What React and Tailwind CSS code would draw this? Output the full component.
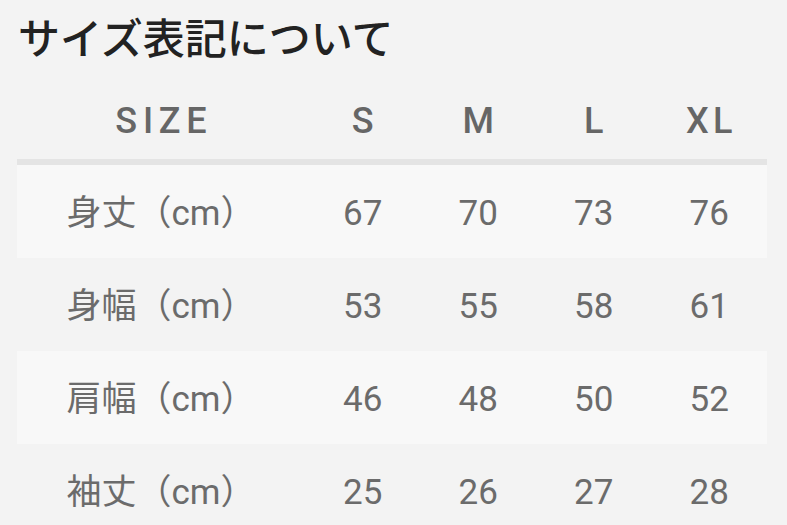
import React from "react";

const rows = [
  { label: "身丈", values: [67, 70, 73, 76] },
  { label: "身幅", values: [53, 55, 58, 61] },
  { label: "肩幅", values: [46, 48, 50, 52] },
  { label: "袖丈", values: [25, 26, 27, 28] },
];

const sizes = ["S", "M", "L", "XL"];

export default function App() {
  return (
    <div
      className="min-h-screen bg-[#f3f3f3] px-[17px] overflow-hidden"
      style={{ fontFamily: "Roboto, 'Noto Sans CJK JP', sans-serif" }}
    >
      <h1 className="pt-[19px] pl-[1px] text-[42px] leading-[42px] font-medium text-[#222222]">
        サイズ表記について
      </h1>

      <div className="mt-[21px] w-[750px]">
        <div className="grid grid-cols-[288px_repeat(4,1fr)] h-[83px] items-center border-b-[6px] border-[#e4e4e4] text-[36px] font-medium text-[#666666]">
          <div className="text-center tracking-[0.16em] pl-[0.16em]">SIZE</div>
          {sizes.map((s) => (
            <div key={s} className="text-center tracking-[0.12em] pl-[0.12em]">
              {s}
            </div>
          ))}
        </div>

        {rows.map((row, i) => (
          <div
            key={row.label}
            className={`grid grid-cols-[288px_repeat(4,1fr)] h-[93px] pt-[6px] items-center text-[35px] text-[#6b6b6b] ${
              i % 2 === 0 ? "bg-[#f8f8f8]" : "bg-[#f3f3f3]"
            }`}
          >
            <div className="text-center">
              {row.label}
              <span>（cm）</span>
            </div>
            {row.values.map((v, j) => (
              <div key={j} className="text-center">
                {v}
              </div>
            ))}
          </div>
        ))}
      </div>
    </div>
  );
}
